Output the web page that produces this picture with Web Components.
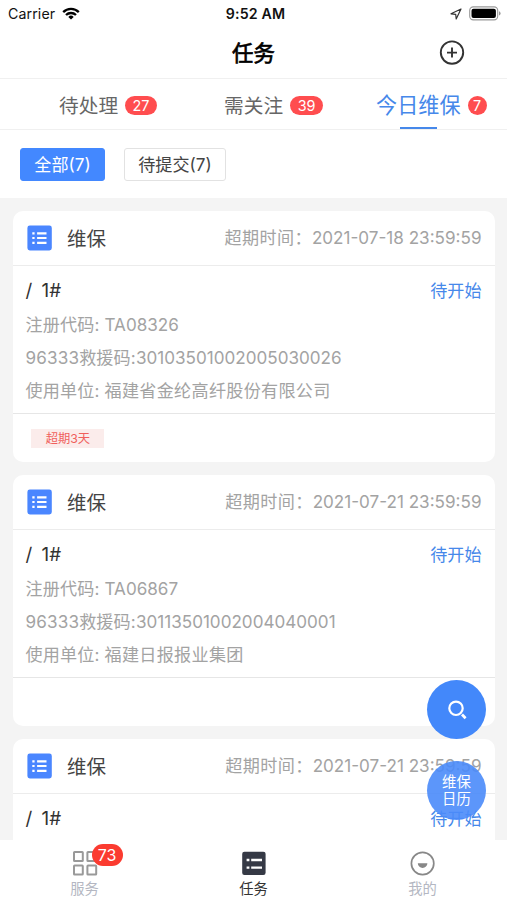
<!DOCTYPE html>
<html lang="zh-CN">
<head>
<meta charset="utf-8">
<title>任务</title>
<style>
  html, body {
    margin: 0;
    height: 100%;
  }

  body {
    width: 507px;
    height: 900px;
    overflow: hidden;
    background: #f4f4f4;
    color: #333;
    font-family: Inter, "Noto Sans CJK SC", sans-serif;
    font-size: 17.1px;
  }
</style>
</head>
<body>
<task-app></task-app>

<script>
const define = (name, html, setup) => {
  const template = document.createElement('template');
  template.innerHTML = html;

  customElements.define(name, class extends HTMLElement {
    constructor() {
      super();
      this.attachShadow({ mode: 'open' });
      this.shadowRoot.append(template.content.cloneNode(true));
    }

    connectedCallback() {
      if (setup) setup(this, this.shadowRoot);
    }
  });
};

define('status-bar', `
  <style>
    :host {
      display: grid;
      grid-template-columns: 1fr auto 1fr;
      align-items: center;
      height: 27px;
      padding: 0 6px 0 8px;
      color: #111;
      font-size: 14.2px;
    }
    .left, .right { display: flex; align-items: center; }
    .left { gap: 7px; letter-spacing: 0.1px; }
    .right { justify-content: flex-end; gap: 7px; }
    .time { margin-left: 2px; font-weight: 600; letter-spacing: 0.15px; }
    svg { display: block; }
  </style>
  <div class="left">
    <span>Carrier</span>
    <svg width="18" height="13" viewBox="0 0 18 13" fill="none" stroke="#000" stroke-width="2.3">
      <path d="M1.2 5.1a11 11 0 0 1 15.6 0"/>
      <path d="M4 8a7.2 7.2 0 0 1 10 0"/>
      <path d="M9 12.6 6.3 9.9a3.9 3.9 0 0 1 5.4 0z" fill="#000" stroke="none"/>
    </svg>
  </div>
  <span class="time">9:52 AM</span>
  <div class="right">
    <svg width="12" height="12" viewBox="0 0 12 12" fill="none" stroke="#333" stroke-width="1.2" stroke-linejoin="round">
      <path d="M11 1 1 5.8l4.7.5.5 4.7z"/>
    </svg>
    <svg width="32" height="15" viewBox="0 0 32 15">
      <rect x=".7" y=".9" width="28" height="13" rx="3.6" fill="#fff" stroke="#999" stroke-width="1.1"/>
      <rect x="2.5" y="2.7" width="24.4" height="9.4" rx="2" fill="#000"/>
      <path d="M30 5.2q1.6.6 1.6 2.2t-1.6 2.2z" fill="#999"/>
    </svg>
  </div>
`);

define('nav-bar', `
  <style>
    :host {
      display: grid;
      grid-template-columns: 1fr auto 1fr;
      align-items: center;
      height: 51px;
      padding: 0 42px;
      border-bottom: 1px solid #f0f0f0;
    }
    .title {
      grid-column: 2;
      padding-bottom: 3px;
      color: #000;
      font-size: 21.4px;
      font-weight: 400;
      -webkit-text-stroke: 0.7px #000;
    }
    svg { justify-self: end; display: block; }
  </style>
  <span class="title"><slot></slot></span>
  <svg width="26" height="26" viewBox="0 0 26 26" fill="none" stroke="#333" stroke-width="1.9">
    <circle cx="13" cy="12.6" r="11.2"/>
    <path d="M13 7.6v10M8 12.6h10"/>
  </svg>
`);

define('top-tab', `
  <style>
    :host {
      display: flex;
      flex: 1;
      flex-direction: column;
      align-items: flex-end;
      height: 50px;
      color: #666;
      font-size: 19.7px;
    }
    .row { display: flex; align-items: center; gap: 7px; height: 49px; margin-bottom: -1px; padding-top: 2px; box-sizing: border-box; white-space: nowrap; }
    .badge {
      min-width: 19px;
      height: 19px;
      margin-top: 2px;
      padding: 0 7.5px;
      box-sizing: border-box;
      border-radius: 10px;
      background: #ff4d4f;
      color: #fff;
      font-size: 14.4px;
      line-height: 19px;
      text-align: center;
    }
    .line { width: 37px; height: 2.5px; margin-right: 50px; background: transparent; }
    :host([active]) { color: #4688ea; font-size: 21.1px; }
    :host([active]) .badge { padding: 0; }
    :host([active]) .line { background: #4688ea; }
  </style>
  <div class="row"><slot></slot><span class="badge"></span></div>
  <div class="line"></div>
`, (host, root) => {
  root.querySelector('.badge').textContent = host.getAttribute('count');
});

define('filter-chip', `
  <style>
    :host {
      display: block;
      box-sizing: border-box;
      height: 33px;
      border: 1px solid #e2e2e2;
      border-radius: 3px;
      background: #fff;
      color: #444;
      font-size: 17.1px;
      line-height: 31px;
      text-align: center;
    }
    :host([active]) {
      border-color: #4388ff;
      background: #4388ff;
      color: #fff;
    }
  </style>
  <slot></slot>
`);

define('task-card', `
  <style>
    :host {
      display: block;
      flex: none;
      border-radius: 10px;
      background: #fff;
      color: #a3a3a3;
    }
    header {
      display: flex;
      align-items: center;
      box-sizing: border-box;
      height: 55px;
      padding: 0 13.5px 0 14px;
      border-bottom: 1px solid #ececec;
    }
    header svg { display: block; margin-right: 14px; }
    .kind { flex: 1; padding-bottom: 2px; color: #444; font-size: 19.5px; }
    .due { display: flex; align-items: baseline; padding-bottom: 4px; white-space: nowrap; }
    .label { letter-spacing: 0.4px; }
    .body { height: 148px; box-sizing: border-box; padding: 6px 13.5px 0 12.5px; border-bottom: 1px solid #e6e6e6; }
    .title { display: flex; justify-content: space-between; align-items: center; height: 36px; }
    .name { color: #333; font-size: 18.8px; word-spacing: 4px; }
    .state { padding-bottom: 2px; color: #4688ea; }
    .row { height: 33px; line-height: 33px; white-space: nowrap; }
    .key { letter-spacing: 0.15px; }
    .unit { letter-spacing: 0.3px; }
    footer { display: flex; align-items: center; height: 48px; padding-left: 18.4px; }
    .late {
      width: 73px;
      height: 19px;
      background: #fbeceb;
      color: #f0605c;
      font-size: 12.3px;
      line-height: 19px;
      text-align: center;
    }
    .late:empty { display: none; }
  </style>
  <header>
    <svg width="26" height="26" viewBox="0 0 26 26">
      <rect x=".4" y=".6" width="24.4" height="24.8" rx="2.4" fill="#4a86ff"/>
      <path d="M10.1 8.3h9.4M10.1 13h9.4M10.1 17.8h9.4M5.3 8.3h2.3M5.3 13h2.3M5.3 17.8h2.3" stroke="#fff" stroke-width="2.2"/>
    </svg>
    <span class="kind">维保</span>
    <span class="due"><span class="label">超期时间：</span><span class="date"></span></span>
  </header>
  <div class="body">
    <div class="title"><span class="name">/ 1#</span><span class="state">待开始</span></div>
    <div class="row"><span class="key">注册代码: </span><span class="code"></span></div>
    <div class="row"><span class="key">96333救援码:</span><span class="rescue"></span></div>
    <div class="row"><span class="key">使用单位: </span><span class="unit"></span></div>
  </div>
  <footer><span class="late"></span></footer>
`, (host, root) => {
  for (const key of ['date', 'code', 'rescue', 'unit', 'late']) {
    root.querySelector('.' + key).textContent = host.getAttribute(key) || '';
  }
});

define('round-button', `
  <style>
    :host {
      display: flex;
      align-items: center;
      justify-content: center;
      width: 59px;
      height: 59px;
      border-radius: 50%;
      background: #4388fa;
      color: #fff;
      font-size: 14.4px;
      line-height: 17px;
      text-align: center;
    }
    :host([soft]) { background: rgba(74, 139, 250, 0.9); }
    ::slotted(div) { padding-bottom: 2px; }
  </style>
  <slot></slot>
`);

define('bottom-item', `
  <style>
    :host {
      display: flex;
      flex: 1;
      flex-direction: column;
      align-items: center;
      padding-top: 10px;
      color: #b4b7c2;
      font-size: 14.3px;
      line-height: 20px;
    }
    :host([active]) { color: #333; }
    .icon { position: relative; height: 29px; }
    .badge {
      position: absolute;
      left: 20px;
      top: -6px;
      width: 31px;
      height: 22px;
      border-radius: 11px;
      background: #fb3b30;
      color: #fff;
      font-size: 16px;
      line-height: 22px;
      text-align: center;
    }
    .badge:empty { display: none; }
    ::slotted(svg) { display: block; }
  </style>
  <div class="icon"><slot name="icon"></slot><span class="badge"></span></div>
  <slot></slot>
`, (host, root) => {
  root.querySelector('.badge').textContent = host.getAttribute('count') || '';
});

define('task-app', `
  <style>
    :host { display: flex; flex-direction: column; height: 900px; position: relative; overflow: hidden; }
    .top { background: #fff; }
    .tabs { display: flex; padding-right: 20.5px; border-bottom: 1px solid #f0f0f0; }
    .filters { display: flex; gap: 19px; height: 50px; padding: 18px 20px 0; }
    .list { display: flex; flex: 1; flex-direction: column; gap: 13px; min-height: 0; padding: 13px 12px 0 13px; overflow: hidden; }
    .bottom { display: flex; height: 60px; background: #fff; }
    .float { position: absolute; right: 21px; top: 680px; display: grid; gap: 22px; }
  </style>
  <div class="top">
    <status-bar></status-bar>
    <nav-bar>任务</nav-bar>
    <div class="tabs">
      <top-tab count="27" style="flex: 0 0 157px">待处理</top-tab>
      <top-tab count="39" style="flex: 0 0 166px">需关注</top-tab>
      <top-tab count="7" active>今日维保</top-tab>
    </div>
    <div class="filters">
      <filter-chip active style="width: 85px">全部(7)</filter-chip>
      <filter-chip style="width: 102px">待提交(7)</filter-chip>
    </div>
  </div>
  <div class="list">
    <task-card date="2021-07-18 23:59:59" code="TA08326" rescue="30103501002005030026" unit="福建省金纶高纤股份有限公司" late="超期3天"></task-card>
    <task-card date="2021-07-21 23:59:59" code="TA06867" rescue="30113501002004040001" unit="福建日报报业集团"></task-card>
    <task-card date="2021-07-21 23:59:59"></task-card>
  </div>
  <div class="bottom">
    <bottom-item count="73">
      <svg slot="icon" width="26" height="26" viewBox="0 0 26 26" fill="none" stroke="#999" stroke-width="2">
        <rect x="2" y="2" width="8.8" height="9" rx=".6"/>
        <rect x="15.4" y="2" width="8.8" height="9" rx=".6"/>
        <rect x="2" y="15.6" width="8.8" height="9" rx=".6"/>
        <rect x="15.4" y="15.6" width="8.8" height="9" rx=".6"/>
      </svg>
      <span>服务</span>
    </bottom-item>
    <bottom-item active>
      <svg slot="icon" width="26" height="26" viewBox="0 0 26 26">
        <rect x="1.2" y="1.8" width="23.4" height="23.2" rx="2.2" fill="#353945"/>
        <path d="M10.2 10h10.8M10.2 17.6h10.8M5.6 10h2.8M5.6 17.6h2.8" stroke="#fff" stroke-width="2.4"/>
      </svg>
      <span>任务</span>
    </bottom-item>
    <bottom-item>
      <svg slot="icon" width="26" height="26" viewBox="0 0 26 26">
        <circle cx="12.6" cy="13.5" r="11.2" fill="none" stroke="#888" stroke-width="1.7"/>
        <path d="M7.8 13.2h9.6a4.8 4.8 0 0 1-9.6 0z" fill="#888"/>
      </svg>
      <span>我的</span>
    </bottom-item>
  </div>
  <div class="float">
    <round-button>
      <svg width="22" height="22" viewBox="0 0 22 22" fill="none" stroke="#fff" stroke-width="2.2">
        <circle cx="10" cy="9.3" r="6.7"/>
        <path d="m16 15.6 3.6 3.6" stroke-width="2.8"/>
      </svg>
    </round-button>
    <round-button soft>
      <div>维保<br>日历</div>
    </round-button>
  </div>
`);
</script>
</body>
</html>
